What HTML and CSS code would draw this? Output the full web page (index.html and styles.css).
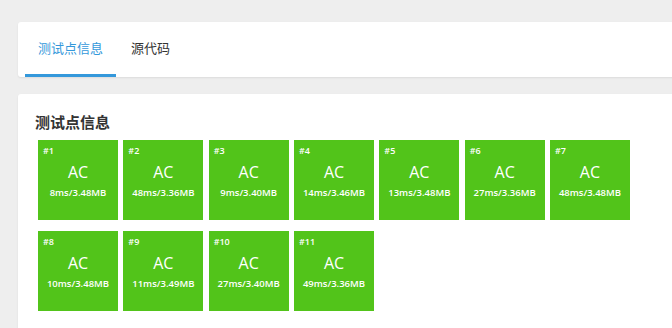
FILE: index.html
```html
<!DOCTYPE html>
<html lang="zh-CN">
<head>
<meta charset="utf-8">
<title>测试点信息</title>
<link rel="stylesheet" href="styles.css">
</head>
<body>
<div class="page">
  <div class="card tabs-card">
    <div class="tabs">
      <div class="tab active">测试点信息</div>
      <div class="tab">源代码</div>
    </div>
  </div>
  <div class="card content-card">
    <h2 class="title">测试点信息</h2>
    <div class="cases">
      <div class="case"><div class="num">#1</div><div class="status">AC</div><div class="stat">8ms/3.48MB</div></div>
      <div class="case"><div class="num">#2</div><div class="status">AC</div><div class="stat">48ms/3.36MB</div></div>
      <div class="case"><div class="num">#3</div><div class="status">AC</div><div class="stat">9ms/3.40MB</div></div>
      <div class="case"><div class="num">#4</div><div class="status">AC</div><div class="stat">14ms/3.46MB</div></div>
      <div class="case"><div class="num">#5</div><div class="status">AC</div><div class="stat">13ms/3.48MB</div></div>
      <div class="case"><div class="num">#6</div><div class="status">AC</div><div class="stat">27ms/3.36MB</div></div>
      <div class="case"><div class="num">#7</div><div class="status">AC</div><div class="stat">48ms/3.48MB</div></div>
      <div class="case"><div class="num">#8</div><div class="status">AC</div><div class="stat">10ms/3.48MB</div></div>
      <div class="case"><div class="num">#9</div><div class="status">AC</div><div class="stat">11ms/3.49MB</div></div>
      <div class="case"><div class="num">#10</div><div class="status">AC</div><div class="stat">27ms/3.40MB</div></div>
      <div class="case"><div class="num">#11</div><div class="status">AC</div><div class="stat">49ms/3.36MB</div></div>
    </div>
  </div>
</div>
</body>
</html>
```
FILE: styles.css
```css
* { box-sizing: border-box; }
html, body { margin: 0; padding: 0; }
body {
  background: #eeeeee;
  font-family: "Open Sans", "Noto Sans CJK SC", sans-serif;
  color: #333;
  overflow: hidden;
}
.page {
  padding: 22px 0 0 18px;
  width: 700px;
}
.card {
  background: #fff;
  border-radius: 3px;
  box-shadow: 0 1px 2px rgba(0, 0, 0, 0.08);
}
.tabs-card {
  height: 55px;
  padding-left: 7px;
  margin-bottom: 17px;
}
.tabs {
  display: flex;
  gap: 2px;
}
.tab {
  font-size: 13px;
  line-height: 52px;
  padding: 0 13px;
  border-bottom: 3px solid transparent;
  color: #333;
}
.tab.active {
  color: #3498db;
  border-bottom-color: #3498db;
}
.content-card {
  padding: 18px 0 0 17px;
  height: 234px;
  border-radius: 3px 3px 0 0;
}
.title {
  margin: 0 0 7px 0;
  font-size: 15px;
  line-height: 21px;
  font-weight: bold;
  color: #333;
}
.cases {
  display: flex;
  flex-wrap: wrap;
  width: 600px;
  column-gap: 5.33px;
  row-gap: 11px;
  padding-left: 3px;
}
.case {
  width: 80px;
  height: 80px;
  background: #52c41a;
  color: #fff;
  padding-top: 5px;
  display: flex;
  flex-direction: column;
}
.num {
  font-size: 9px;
  font-weight: 600;
  line-height: 12px;
  padding-left: 5px;
}
.status {
  margin-top: 5px;
  font-size: 16px;
  line-height: 20px;
  text-align: center;
}
.stat {
  margin-top: 4px;
  font-size: 9.5px;
  font-weight: 600;
  line-height: 14px;
  text-align: center;
}
```
